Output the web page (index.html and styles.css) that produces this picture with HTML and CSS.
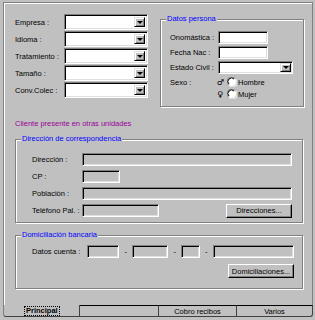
FILE: index.html
```html
<!DOCTYPE html>
<html lang="es">
<head>
    <meta charset="UTF-8">
    <title>Cliente</title>
    <link rel="stylesheet" href="styles.css">
</head>
<body>
    <div class="window">
        <div class="page">
            <div class="top">
                <div class="general">
                    <div class="row"><span class="label">Empresa :</span><div class="combo"><span class="drop"></span></div></div>
                    <div class="row"><span class="label">Idioma :</span><div class="combo"><span class="drop"></span></div></div>
                    <div class="row"><span class="label">Tratamiento :</span><div class="combo"><span class="drop"></span></div></div>
                    <div class="row"><span class="label">Tamaño :</span><div class="combo"><span class="drop"></span></div></div>
                    <div class="row"><span class="label">Conv.Colec :</span><div class="combo"><span class="drop"></span></div></div>
                </div>

                <fieldset class="group persona">
                    <legend>Datos persona</legend>
                    <div class="prow"><span class="plabel">Onomástica :</span><div class="edit w-ono"></div></div>
                    <div class="prow"><span class="plabel">Fecha Nac :</span><div class="edit w-ono"></div></div>
                    <div class="prow"><span class="plabel">Estado Civil :</span><div class="combo w-civil"><span class="drop"></span></div></div>
                    <div class="srow">
                        <span class="plabel">Sexo :</span>
                        <span class="sym">♂</span>
                        <svg class="radio" width="10" height="10" viewBox="0 0 10 10">
                            <circle cx="5" cy="5" r="4" fill="#fff"/>
                            <path d="M1.2 7.8 A4 4 0 0 1 7.8 1.2" fill="none" stroke="#808080" stroke-width="1"/>
                            <path d="M2 7 A3 3 0 0 1 7 2" fill="none" stroke="#000" stroke-width="1"/>
                            <path d="M8.8 2.2 A4 4 0 0 1 2.2 8.8" fill="none" stroke="#fff" stroke-width="1"/>
                        </svg>
                        <span class="opt">Hombre</span>
                    </div>
                    <div class="srow">
                        <span class="plabel"></span>
                        <span class="sym">♀</span>
                        <svg class="radio" width="10" height="10" viewBox="0 0 10 10">
                            <circle cx="5" cy="5" r="4" fill="#fff"/>
                            <path d="M1.2 7.8 A4 4 0 0 1 7.8 1.2" fill="none" stroke="#808080" stroke-width="1"/>
                            <path d="M2 7 A3 3 0 0 1 7 2" fill="none" stroke="#000" stroke-width="1"/>
                            <path d="M8.8 2.2 A4 4 0 0 1 2.2 8.8" fill="none" stroke="#fff" stroke-width="1"/>
                        </svg>
                        <span class="opt">Mujer</span>
                    </div>
                </fieldset>
            </div>

            <div class="presente">Cliente presente en otras unidades</div>

            <fieldset class="group correo">
                <legend>Dirección de correspondencia</legend>
                <div class="frow"><span class="flabel">Dirección :</span><div class="field w-long"></div></div>
                <div class="frow"><span class="flabel">CP :</span><div class="field w-cp"></div></div>
                <div class="frow"><span class="flabel">Población :</span><div class="field w-long"></div></div>
                <div class="frow">
                    <span class="flabel">Teléfono Pal. :</span><div class="field w-tel"></div>
                    <button class="btn btn-dir">Direcciones...</button>
                </div>
            </fieldset>

            <fieldset class="group banco">
                <legend>Domiciliación bancaria</legend>
                <div class="frow">
                    <span class="blabel">Datos cuenta :</span>
                    <div class="field w-c1"></div><span class="dash">-</span>
                    <div class="field w-c2"></div><span class="dash">-</span>
                    <div class="field w-c3"></div><span class="dash">-</span>
                    <div class="field w-c4"></div>
                </div>
                <div class="brow">
                    <button class="btn btn-dom">Domiciliaciones...</button>
                </div>
            </fieldset>
        </div>

        <div class="tabs">
            <div class="tab active"><span class="focus">Principal</span></div>
            <div class="tab t2"></div>
            <div class="tab t3">Cobro recibos</div>
            <div class="tab t4">Varios</div>
        </div>
    </div>
</body>
</html>
```

FILE: styles.css
```css
body {
    margin: 0;
    background: #c0c0c0;
    font-family: "Liberation Sans", Arial, sans-serif;
    font-size: 7.5px;
    line-height: 9px;
    color: #000;
}

.window {
    margin: 2px 0 0 3px;
    width: 310px;
}

.page {
    height: 303px;
    box-sizing: border-box;
    border: 1px solid #808080;
    border-bottom: none;
    box-shadow: inset 1px 1px 0 #fff;
    padding: 11px 8px 0 11px;
}

.top {
    display: flex;
    align-items: flex-start;
}

.general {
    display: flex;
    flex-direction: column;
    gap: 1px;
    width: 133px;
}

.row {
    display: flex;
    align-items: center;
    height: 16px;
}

.label {
    width: 49px;
    flex-shrink: 0;
}

/* sunken boxes */
.combo, .edit, .field {
    box-sizing: border-box;
    border: 1px solid;
    border-color: #808080 #fff #fff #808080;
    box-shadow: inset 1px 1px 0 #000, inset -1px -1px 0 #dfdfdf;
}

.combo {
    width: 84px;
    height: 16px;
    background: #fff;
    display: flex;
    justify-content: flex-end;
    padding: 2px;
}

.drop {
    width: 11px;
    height: 10px;
    box-sizing: border-box;
    background: #c0c0c0;
    border: 1px solid;
    border-color: #dfdfdf #000 #000 #dfdfdf;
    box-shadow: inset 1px 1px 0 #fff, inset -1px -1px 0 #808080;
    display: flex;
    align-items: center;
    justify-content: center;
}

.drop::after {
    content: "";
    border-left: 3px solid transparent;
    border-right: 3px solid transparent;
    border-top: 3px solid #000;
}

.edit {
    height: 13px;
    background: #fff;
}

.field {
    height: 13px;
    background: #c0c0c0;
}

/* group boxes */
.group {
    margin: 0;
    min-width: 0;
    box-sizing: border-box;
    border: 1px solid #808080;
    box-shadow: inset 1px 1px 0 #fff, 1px 1px 0 #fff;
}

.group legend {
    color: #0000ff;
    line-height: 10px;
    padding: 0 1px;
    background: #c0c0c0;
}

.persona {
    width: 144px;
    margin-left: 12px;
    padding: 7px 4px 6px 9px;
}

.persona legend {
    margin-left: -4px;
}

.prow {
    display: flex;
    align-items: center;
    height: 13px;
    margin-bottom: 2px;
}

.plabel {
    width: 48px;
    flex-shrink: 0;
}

.w-ono { width: 50px; }
.w-civil { width: 75px; height: 13px; padding: 1px; }
.w-civil .drop { height: 9px; }

.srow {
    display: flex;
    align-items: center;
    height: 12px;
}

.sym {
    font-family: "DejaVu Sans", sans-serif;
    font-size: 8px;
    width: 10px;
    margin-left: -1px;
}

.radio {
    display: block;
}

.opt {
    margin-left: 1px;
}

.presente {
    margin-top: 12px;
    color: #990099;
}

.correo {
    width: 288px;
    margin-top: 6px;
    padding: 9px 10px 5px 16px;
}

.correo legend {
    margin-left: -11px;
}

.frow {
    display: flex;
    align-items: center;
    height: 13px;
    margin-bottom: 4px;
}

.frow:last-of-type {
    margin-bottom: 0;
}

.flabel {
    width: 50px;
    flex-shrink: 0;
}

.w-long { width: 210px; }
.w-cp { width: 38px; }
.w-tel { width: 77px; }

.btn {
    font-family: inherit;
    font-size: 7.5px;
    line-height: 9px;
    color: #000;
    background: #c0c0c0;
    box-sizing: border-box;
    height: 14px;
    padding: 0;
    border: 1px solid;
    border-color: #fff #000 #000 #fff;
    box-shadow: inset -1px -1px 0 #808080;
}

.btn-dir {
    width: 66px;
    margin-left: auto;
}

.banco {
    width: 288px;
    margin-top: 7px;
    padding: 5px 8px 10px 16px;
}

.banco legend {
    margin-left: -11px;
}

.blabel {
    width: 55px;
    flex-shrink: 0;
}

.dash {
    width: 13px;
    text-align: center;
}

.w-c1 { width: 33px; }
.w-c2 { width: 37px; }
.w-c3 { width: 19px; }
.w-c4 { width: 83px; }

.brow {
    display: flex;
    justify-content: flex-end;
    margin-top: 6px;
}

.btn-dom {
    width: 66px;
}

/* tab strip */
.tabs {
    display: flex;
    height: 12px;
}

.tab {
    box-sizing: border-box;
    border-top: 1px solid #000;
    border-bottom: 1px solid #404040;
    border-right: 1px solid #404040;
    display: flex;
    align-items: center;
    justify-content: center;
}

.tab.active {
    width: 77px;
    border-top: none;
    border-left: 1px solid #808080;
    border-bottom-left-radius: 3px;
    justify-content: flex-start;
    padding-left: 20px;
}

.focus {
    font-weight: bold;
    border: 1px dotted #000;
    padding: 0 1px;
    line-height: 8px;
}

.t2 { width: 79px; }
.t3 { width: 78px; }
.t4 {
    width: 76px;
    border-bottom-right-radius: 3px;
}
```
